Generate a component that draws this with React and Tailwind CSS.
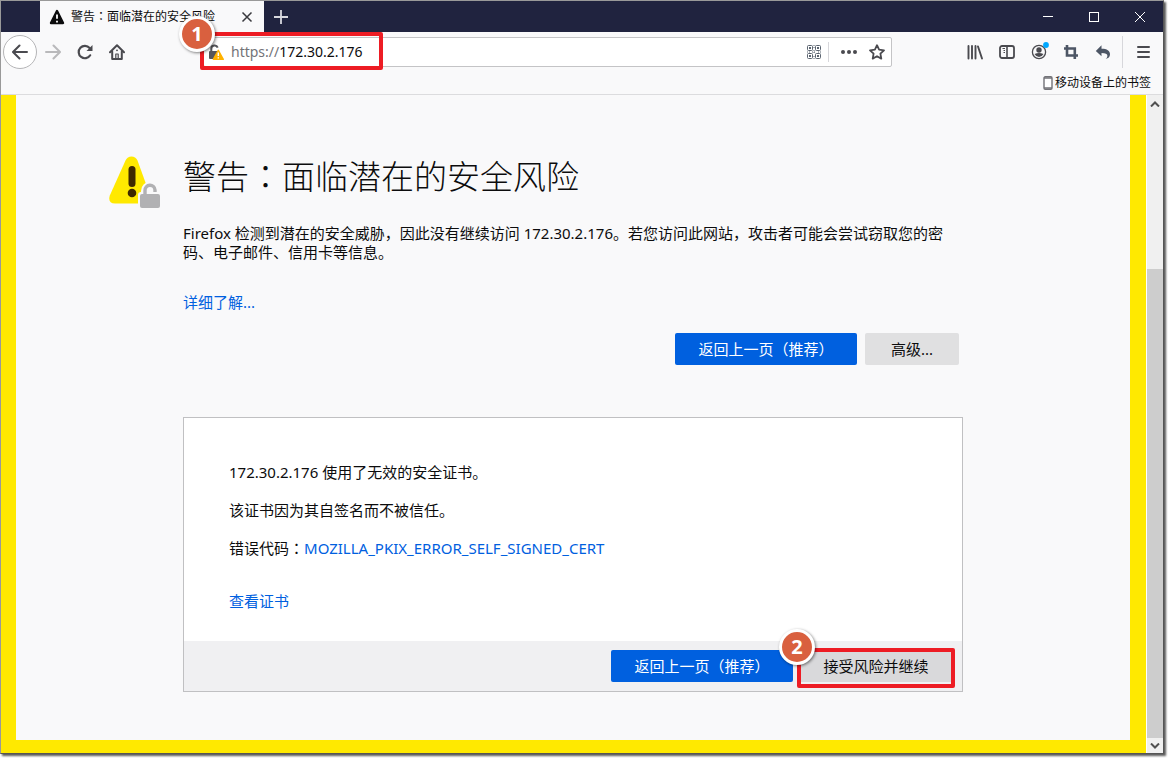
import React from "react";

function BackIcon() {
  return (
    <svg viewBox="0 0 16 16" className="w-4 h-4" fill="none" stroke="#4a4a4f" strokeWidth="2" strokeLinecap="round" strokeLinejoin="round">
      <path d="M7.5 1.5 1 8l6.500 6.500M1.500 8H15" />
    </svg>
  );
}

function ForwardIcon() {
  return (
    <svg viewBox="0 0 16 16" className="w-4 h-4" fill="none" stroke="#b9b9bb" strokeWidth="2" strokeLinecap="round" strokeLinejoin="round">
      <path d="M8.500 1.500 15 8l-6.500 6.500M14.500 8H1" />
    </svg>
  );
}

function ReloadIcon() {
  return (
    <svg viewBox="0 0 16 16" className="w-4 h-4" fill="none" stroke="#4a4a4f" strokeWidth="2.200" strokeLinecap="round">
      <path d="M13.200 11.300A6.200 6.200 0 1 1 12.600 4" />
      <path d="M15.500 1v6h-6z" fill="#4a4a4f" stroke="none" />
    </svg>
  );
}

function HomeIcon() {
  return (
    <svg viewBox="0 0 16 16" className="w-4 h-4" fill="none" stroke="#4a4a4f" strokeWidth="2" strokeLinecap="round" strokeLinejoin="round">
      <path d="M1 8.300 8 1.300l7 7" />
      <path d="M3.200 7.500V15h9.600V7.500" />
      <path d="M6.800 14.500V10h2.400v4.500" strokeWidth="1.200" />
      <circle cx="8" cy="6.300" r=".9" fill="#4a4a4f" stroke="none" />
    </svg>
  );
}

function InsecureLockIcon() {
  return (
    <svg viewBox="0 0 16 16" className="w-4 h-4">
      <path d="M3.300 8V4.800a3.300 3.300 0 0 1 6.400-1.100" fill="none" stroke="#57575b" strokeWidth="2" />
      <rect x="1" y="7" width="9" height="8" rx="1" fill="#57575b" />
      <path d="M10.300 6.300 15.300 15.300H5.300z" fill="#ffb200" stroke="#ffb200" strokeWidth="1.400" strokeLinejoin="round" />
      <path d="M10.300 8.600v3.300M10.300 13.300v1.300" stroke="#fff" strokeWidth="1.400" />
    </svg>
  );
}

function QrIcon() {
  const corners = [
    [1, 1],
    [9, 1],
    [1, 9],
    [9, 9],
  ];
  return (
    <svg viewBox="0 0 16 16" className="w-4 h-4" fill="none" stroke="#5b6470" strokeWidth="1">
      {corners.map(([x, y]) => (
        <g key={`${x}-${y}`}>
          <rect x={x + 0.5} y={y + 0.5} width="5" height="5" rx="1" />
          <rect x={x + 2} y={y + 2} width="2" height="2" fill="#5b6470" stroke="none" />
        </g>
      ))}
      <path d="M8 1v3M8 6v4M8 12v3M1 8h3M6 8h4M12 8h3" strokeDasharray="1 1" />
    </svg>
  );
}

function DotsIcon() {
  return (
    <svg viewBox="0 0 16 16" className="w-4 h-4" fill="#4a4a4f">
      <circle cx="2" cy="8" r="2" />
      <circle cx="8" cy="8" r="2" />
      <circle cx="14" cy="8" r="2" />
    </svg>
  );
}

function StarIcon() {
  return (
    <svg viewBox="0 0 16 16" className="w-4 h-4" fill="none" stroke="#4a4a4f" strokeWidth="1.800" strokeLinejoin="round">
      <path d="m8 1.200 2.100 4.500 4.900.6-3.600 3.400.9 4.900L8 12.200l-4.300 2.400.9-4.900L1 6.300l4.900-.6z" />
    </svg>
  );
}

function LibraryIcon() {
  return (
    <svg viewBox="0 0 16 16" className="w-4 h-4" fill="none" stroke="#4a4a4f" strokeWidth="1.900" strokeLinecap="round">
      <path d="M1.500 2v12.500M5 2v12.500M8.500 2v12.500M11 2.500l4 12" />
    </svg>
  );
}

function SidebarIcon() {
  return (
    <svg viewBox="0 0 16 16" className="w-4 h-4" fill="none" stroke="#4a4a4f">
      <rect x="1" y="2" width="14" height="12" rx="2" strokeWidth="1.800" />
      <path d="M8 2v12" strokeWidth="1.600" />
      <path d="M3.500 4.500h2.500M4.500 6.500H6M4.500 8.500H6" strokeWidth="1" />
    </svg>
  );
}

function AccountIcon() {
  return (
    <svg viewBox="0 0 20 20" className="w-5 h-5">
      <circle cx="10" cy="10" r="6.600" fill="none" stroke="#4a4a4f" strokeWidth="1.300" />
      <circle cx="10" cy="8" r="2.700" fill="#4a4a4f" />
      <path d="M5.500 12Q10 10 14.500 12 12.800 15 10 15T5.500 12z" fill="#4a4a4f" />
      <circle cx="17" cy="3" r="2.900" fill="#00a8ff" />
    </svg>
  );
}

function CropIcon() {
  return (
    <svg viewBox="0 0 16 16" className="w-4 h-4" fill="none" stroke="#4d5665" strokeWidth="2.600">
      <path d="M4 1v10.500h11" />
      <path d="M1 4.500h10.800V15" />
    </svg>
  );
}

function UndoIcon() {
  return (
    <svg viewBox="0 0 16 16" className="w-4 h-4">
      <path d="M6.500 1.300v3.400c5.500 0 8.500 2 8.500 5.600 0 2.600-1.700 4.300-4.300 4.600 1.200-1 1.700-2 1.700-3.200 0-1.900-1.800-2.800-5.900-2.800v3.400L.8 6.900z" fill="#4d5665" />
    </svg>
  );
}

function MenuIcon() {
  return (
    <svg viewBox="0 0 16 16" className="w-4 h-4" fill="none" stroke="#4a4a4f" strokeWidth="2" strokeLinecap="round">
      <path d="M3 3h11M3 8h11M3 13h11" />
    </svg>
  );
}

function TabWarningIcon() {
  return (
    <svg viewBox="0 0 16 16" className="w-4 h-4 shrink-0">
      <path d="M8 2 14 14H2z" fill="#0c0c0d" stroke="#0c0c0d" strokeWidth="2.400" strokeLinejoin="round" />
      <path d="M8 5.500v4.200M8 11.700v1.700" stroke="#fff" strokeWidth="1.800" />
    </svg>
  );
}

function PageWarningIcon() {
  return (
    <svg viewBox="0 0 52 54" className="w-[52px] h-[54px] shrink-0">
      <path d="M16.500 4.500Q18.500.5 22.500.5t6 4L41 39q2.500 8-4 8.500H6Q-1.500 47 .8 39.500z" fill="#ffe900" />
      <path d="M23 13.500v14" stroke="#3e2800" strokeWidth="7" strokeLinecap="round" />
      <circle cx="23" cy="37" r="4.300" fill="#3e2800" />
      <path d="M36 40v-5a5.500 5.500 0 0 1 11 0" fill="none" stroke="#f9f9fa" strokeWidth="8" />
      <rect x="29" y="36" width="24" height="19" rx="3" fill="#f9f9fa" />
      <path d="M36 40v-5.500a5 5 0 0 1 10-.5v2" fill="none" stroke="#b1b1b3" strokeWidth="3.400" />
      <rect x="31" y="38" width="20" height="14" rx="2" fill="#b1b1b3" />
    </svg>
  );
}

function PhoneIcon() {
  return (
    <svg viewBox="0 0 10 14" className="w-[10px] h-[14px]">
      <rect x="1" y=".8" width="8" height="12.400" rx="1.200" fill="#fff" stroke="#737378" strokeWidth="1.400" />
      <path d="M1 2h8M1 12h8" stroke="#737378" strokeWidth="1.600" />
    </svg>
  );
}

function ToolButton({ label, children }) {
  return (
    <button type="button" aria-label={label} className="w-8 h-8 flex items-center justify-center">
      {children}
    </button>
  );
}

// Full-width colon drawn in the middle of its cell
function Colon() {
  return <span className="font-['Noto_Sans_CJK_TC',sans-serif]">：</span>;
}

function StepBadge({ number, className }) {
  return (
    <span
      className={`absolute w-9 h-9 rounded-full border-3 border-white bg-[#d9603f] text-white text-xl font-bold flex items-center justify-center shadow-[1px_1px_3px_rgba(0,0,0,0.5)] ${className}`}
    >
      {number}
    </span>
  );
}

function PrimaryButton({ children }) {
  return (
    <button type="button" className="h-8 w-[182px] rounded-xs bg-[#0060df] text-white">
      {children}
    </button>
  );
}

function TitleBar() {
  return (
    <div className="flex h-[31px] bg-[#20233f] text-white">
      <div className="ml-[39px] w-56 bg-[#f9f9fa] text-[#0c0c0d] flex items-center pl-[9px] pr-[7px]">
        <TabWarningIcon />
        <span className="ml-1.5 flex-1 text-xs whitespace-nowrap">
          警告
          <Colon />
          面临潜在的安全风险
        </span>
        <button type="button" aria-label="关闭标签页" className="w-5 h-5 flex items-center justify-center">
          <svg viewBox="0 0 12 12" className="w-3 h-3" stroke="#3a3a3e" strokeWidth="1.500">
            <path d="M1.500 1.500l9 9M10.500 1.500l-9 9" />
          </svg>
        </button>
      </div>
      <button type="button" aria-label="新建标签页" className="w-[34px] flex items-center justify-center">
        <svg viewBox="0 0 14 14" className="w-3.5 h-3.5" stroke="#d8d8de" strokeWidth="1.800">
          <path d="M7 0v14M0 7h14" />
        </svg>
      </button>
      <div className="ml-auto flex">
        <button type="button" aria-label="最小化" className="w-[46px] flex items-center justify-center">
          <svg viewBox="0 0 10 10" className="w-2.5 h-2.5" stroke="#fff">
            <path d="M0 4.500h10" />
          </svg>
        </button>
        <button type="button" aria-label="最大化" className="w-[46px] flex items-center justify-center">
          <svg viewBox="0 0 10 10" className="w-2.5 h-2.5" stroke="#fff" fill="none">
            <rect x=".5" y=".5" width="9" height="9" />
          </svg>
        </button>
        <button type="button" aria-label="关闭" className="w-[46px] flex items-center justify-center">
          <svg viewBox="0 0 10 10" className="w-2.5 h-2.5" stroke="#fff">
            <path d="M0 0l10 10M10 0L0 10" />
          </svg>
        </button>
      </div>
    </div>
  );
}

function UrlBar() {
  return (
    <div className="relative ml-[70px] mr-[67px] flex-1 h-[30px] flex items-center bg-white border border-[#c4c4c6] rounded-xs pl-1">
      <InsecureLockIcon />
      <label htmlFor="url" className="ml-[7px] text-sm text-[#737378]">
        https://
      </label>
      <input id="url" type="text" defaultValue="172.30.2.176" className="flex-1 min-w-0 text-sm text-[#0c0c0d] outline-none" />
      <button type="button" aria-label="二维码" className="pr-1.5">
        <QrIcon />
      </button>
      <div className="w-px h-5 bg-[#d7d7db]" />
      <button type="button" aria-label="页面操作" className="ml-3">
        <DotsIcon />
      </button>
      <button type="button" aria-label="添加书签" className="ml-3 mr-1.5">
        <StarIcon />
      </button>
      <div className="absolute -left-1 -top-1.5 w-[183px] h-[38px] border-4 border-[#ed1c24] rounded-xs pointer-events-none" />
      <StepBadge number={1} className="-left-[25px] -top-[22px]" />
    </div>
  );
}

function Toolbar() {
  return (
    <div className="bg-[#f9f9fa] border-b border-[#dcdcde]">
      <div className="flex items-center h-10 pl-0.5">
        <button
          type="button"
          aria-label="后退"
          className="w-[34px] h-[34px] rounded-full border border-[#b5b5b7] bg-white flex items-center justify-center"
        >
          <BackIcon />
        </button>
        <ToolButton label="前进"><ForwardIcon /></ToolButton>
        <ToolButton label="刷新"><ReloadIcon /></ToolButton>
        <ToolButton label="主页"><HomeIcon /></ToolButton>
        <UrlBar />
        <ToolButton label="书库"><LibraryIcon /></ToolButton>
        <ToolButton label="侧栏"><SidebarIcon /></ToolButton>
        <ToolButton label="账户"><AccountIcon /></ToolButton>
        <ToolButton label="截图"><CropIcon /></ToolButton>
        <ToolButton label="撤销"><UndoIcon /></ToolButton>
        <div className="ml-[3px] w-px h-8 bg-[#d7d7db]" />
        <div className="ml-1 mr-1">
          <ToolButton label="菜单"><MenuIcon /></ToolButton>
        </div>
      </div>
      <div className="flex justify-end h-[22px] pr-3">
        <button type="button" className="flex items-center gap-0.5 text-xs text-[#0c0c0d]">
          <PhoneIcon />
          移动设备上的书签
        </button>
      </div>
    </div>
  );
}

function ScrollBar() {
  return (
    <div className="w-[17px] shrink-0 bg-[#f0f0f0] flex flex-col border-l border-white">
      <div className="h-[17px] flex items-center justify-center">
        <svg viewBox="0 0 10 6" className="w-2.5 h-1.5" fill="none" stroke="#505050" strokeWidth="2">
          <path d="M1 5.500l4-4 4 4" />
        </svg>
      </div>
      <div className="flex-1" />
      <div className="flex-3 bg-[#cdcdcd]" />
      <div className="h-[15px] flex items-center justify-center">
        <svg viewBox="0 0 10 6" className="w-2.5 h-1.5" fill="none" stroke="#505050" strokeWidth="2">
          <path d="M1 .5l4 4 4-4" />
        </svg>
      </div>
    </div>
  );
}

function CertificateCard() {
  return (
    <section className="mt-[52px] bg-white border border-[#c0c0c2]">
      <div className="px-[45px] pt-11 pb-[30px] leading-5">
        <p>172.30.2.176 使用了无效的安全证书。</p>
        <p className="mt-[18px]">该证书因为其自签名而不被信任。</p>
        <p className="mt-[18px]">
          错误代码
          <Colon />
          <a href="#error" className="text-[#0060df]">MOZILLA_PKIX_ERROR_SELF_SIGNED_CERT</a>
        </p>
        <p className="mt-[33px]">
          <a href="#certificate" className="text-[#0060df]">查看证书</a>
        </p>
      </div>
      <div className="flex justify-end gap-2 bg-[#f0f0f2] py-[9px] pr-[11px]">
        <PrimaryButton>返回上一页（推荐）</PrimaryButton>
        <div className="relative">
          <button type="button" className="h-8 w-[150px] bg-[#d9d9db]">接受风险并继续</button>
          <div className="absolute -left-1 -top-0.5 w-[158px] h-10 border-4 border-[#ed1c24] rounded-xs pointer-events-none" />
          <StepBadge number={2} className="-left-[22px] -top-[21px]" />
        </div>
      </div>
    </section>
  );
}

function WarningPage() {
  return (
    <main className="flex-1 bg-[#f9f9fa] border-[#ffe900] border-l-[15px] border-r-[16px] border-b-[13px] pt-[60px] pb-12 pl-[93px] pr-[167px] flex items-start text-[15px]">
      <div className="pt-px">
        <PageWarningIcon />
      </div>
      <div className="ml-[22px] flex-1 min-w-0">
        <div className="pr-1">
          <h1 className="text-[33px] leading-10 font-light">
            警告
            <Colon />
            面临潜在的安全风险
          </h1>
          <p className="mt-[27px] leading-[19px]">
            Firefox 检测到潜在的安全威胁，因此没有继续访问 172.30.2.176。若您访问此网站，攻击者可能会尝试窃取您的密码、电子邮件、信用卡等信息。
          </p>
          <p className="mt-[30px] leading-5">
            <a href="#learn-more" className="text-[#0060df]">详细了解...</a>
          </p>
          <div className="mt-[21px] flex justify-end gap-2">
            <PrimaryButton>返回上一页（推荐）</PrimaryButton>
            <button type="button" className="h-8 w-[94px] rounded-xs bg-[#e0e0e1]">高级...</button>
          </div>
        </div>
        <CertificateCard />
      </div>
    </main>
  );
}

export default function App() {
  return (
    <div className="min-h-screen bg-white pr-1 pb-1 flex flex-col font-['Noto_Sans','Noto_Sans_CJK_SC',sans-serif] text-[#0c0c0d]">
      <div className="flex-1 flex flex-col border border-[#999] border-r-[#555] border-b-[#555] shadow-[2px_2px_2px_rgba(0,0,0,0.65)]">
        <TitleBar />
        <Toolbar />
        <div className="flex-1 flex">
          <WarningPage />
          <ScrollBar />
        </div>
      </div>
    </div>
  );
}
